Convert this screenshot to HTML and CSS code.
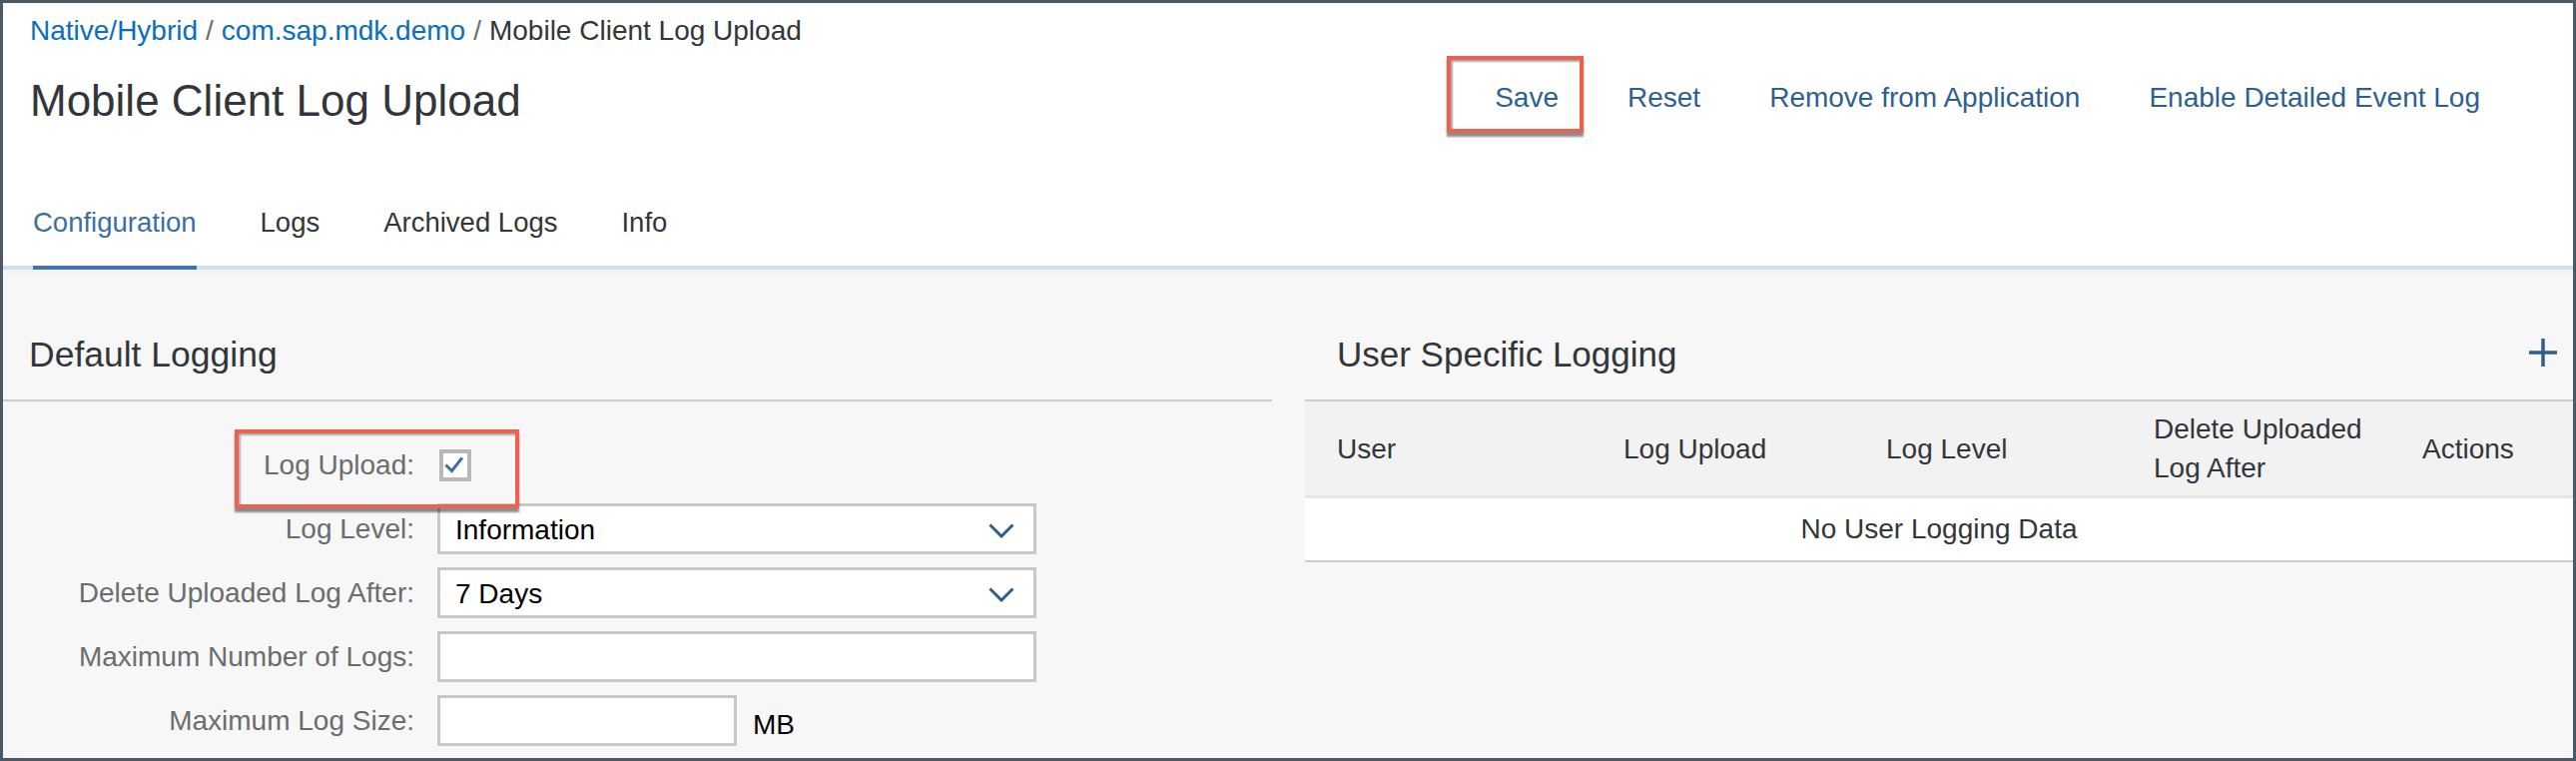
FILE: index.html
```html
<!DOCTYPE html>
<html lang="en">
<head>
<meta charset="utf-8">
<title>Mobile Client Log Upload</title>
<link rel="stylesheet" href="styles.css">
</head>
<body>
<div class="page">
  <header class="obj-header">
    <div class="head-left">
      <nav class="crumbs">
        <a class="crumb-link">Native/Hybrid</a><span class="sep">/</span><a class="crumb-link">com.sap.mdk.demo</a><span class="sep">/</span><span class="crumb-cur">Mobile Client Log Upload</span>
      </nav>
      <h1 class="title">Mobile Client Log Upload</h1>
    </div>
    <div class="actions">
      <button class="act act-marked">Save</button>
      <button class="act">Reset</button>
      <button class="act">Remove from Application</button>
      <button class="act">Enable Detailed Event Log</button>
    </div>
  </header>

  <div class="tabbar">
    <div class="tab tab-active">Configuration</div>
    <div class="tab">Logs</div>
    <div class="tab">Archived Logs</div>
    <div class="tab">Info</div>
  </div>

  <main class="content">
    <section class="panel panel-left">
      <div class="panel-head">
        <h2 class="panel-title">Default Logging</h2>
      </div>
      <div class="form">
        <div class="form-row form-row-marked">
          <label class="form-label">Log Upload:</label>
          <span class="checkbox">
            <svg width="24" height="24" viewBox="0 0 24 24"><path d="M3.5 12.5 L8.5 17.5 L18 5.5" fill="none" stroke="#3a6ea5" stroke-width="3" stroke-linecap="square"/></svg>
          </span>
        </div>
        <div class="form-row">
          <label class="form-label">Log Level:</label>
          <div class="select">
            <span class="select-value">Information</span>
            <svg class="chev" width="26" height="15" viewBox="0 0 26 15"><path d="M1.5 1.5 L13 13 L24.5 1.5" fill="none" stroke="#2f5f8f" stroke-width="3"/></svg>
          </div>
        </div>
        <div class="form-row">
          <label class="form-label">Delete Uploaded Log After:</label>
          <div class="select">
            <span class="select-value">7 Days</span>
            <svg class="chev" width="26" height="15" viewBox="0 0 26 15"><path d="M1.5 1.5 L13 13 L24.5 1.5" fill="none" stroke="#2f5f8f" stroke-width="3"/></svg>
          </div>
        </div>
        <div class="form-row">
          <label class="form-label">Maximum Number of Logs:</label>
          <div class="input input-wide"></div>
        </div>
        <div class="form-row">
          <label class="form-label">Maximum Log Size:</label>
          <div class="input input-short"></div>
          <span class="unit">MB</span>
        </div>
      </div>
    </section>

    <section class="panel panel-right">
      <div class="panel-head panel-head-right">
        <h2 class="panel-title">User Specific Logging</h2>
        <svg class="plus" width="30" height="30" viewBox="0 0 30 30"><path d="M15 1 V29 M1 15 H29" stroke="#2f5f8f" stroke-width="3.5" fill="none"/></svg>
      </div>
      <div class="table">
        <div class="thead">
          <div class="th">User</div>
          <div class="th">Log Upload</div>
          <div class="th">Log Level</div>
          <div class="th">Delete Uploaded<br>Log After</div>
          <div class="th">Actions</div>
        </div>
        <div class="tbody">
          <div class="empty">No User Logging Data</div>
        </div>
      </div>
    </section>
  </main>
</div>
</body>
</html>
```

FILE: styles.css
```css
* { box-sizing: border-box; }

html, body {
  margin: 0;
  padding: 0;
  background: #ffffff;
}

body {
  font-family: "Liberation Sans", Arial, sans-serif;
  font-size: 28px;
  color: #32363a;
}

.page {
  width: 2580px;
  height: 762px;
  border: 3px solid #4b5a66;
  display: flex;
  flex-direction: column;
  overflow: hidden;
}

/* ---------- header ---------- */
.obj-header {
  display: flex;
  justify-content: space-between;
  align-items: flex-start;
  padding: 11px 0 0 27px;
  background: #ffffff;
}

.crumbs {
  font-size: 28px;
  line-height: 34px;
  white-space: nowrap;
}

.crumb-link {
  color: #0a6ebd;
  text-decoration: none;
}

.sep {
  color: #6a6d70;
  padding: 0 8px;
}

.crumb-cur {
  color: #32363a;
}

.title {
  margin: 26.5px 0 0;
  font-size: 44px;
  line-height: 52px;
  font-weight: normal;
  color: #32363a;
  white-space: nowrap;
}

.actions {
  display: flex;
  margin-top: 67px;
  padding-right: 58.5px;
}

.act {
  font-family: inherit;
  font-size: 28px;
  line-height: 34px;
  color: #2f5f8f;
  background: none;
  border: none;
  padding: 0 34.5px;
  margin: 0;
  white-space: nowrap;
}

.act-marked {
  position: relative;
}

.act-marked::after {
  content: "";
  position: absolute;
  left: -14px;
  right: 10px;
  top: -25px;
  bottom: -18px;
  border: 4px solid #eb6350;
  box-shadow: 0 4px 2px rgba(0, 0, 0, 0.45), inset 2px 2px 2px rgba(0, 0, 0, 0.35);
}

/* ---------- tabs ---------- */
.tabbar {
  display: flex;
  gap: 64px;
  padding-left: 30px;
  background: #ffffff;
  box-shadow: inset 0 -4px 0 #d1e0ee;
}

.tab {
  font-size: 27.5px;
  line-height: 34px;
  padding: 79.5px 0 26px;
  border-bottom: 4px solid transparent;
  color: #32363a;
  white-space: nowrap;
}

.tab-active {
  color: #3b6ea5;
  border-bottom-color: #3e75a8;
}

/* ---------- content ---------- */
.content {
  flex: 1;
  display: flex;
  gap: 33px;
  background: #f7f7f7;
  border-top: 4px solid #f1f4f7;
}

.panel-left {
  width: 1271px;
  flex: none;
}

.panel-right {
  flex: 1;
}

.panel-head {
  display: flex;
  align-items: center;
  justify-content: space-between;
  padding: 60px 15px 24px 26px;
  border-bottom: 2px solid #cccccc;
}

.panel-head-right {
  padding-left: 32px;
}

.panel-title {
  margin: 0;
  font-size: 35px;
  line-height: 42px;
  font-weight: normal;
  color: #32363a;
}

.panel-left .panel-title {
  font-size: 35.5px;
}

.plus {
  display: block;
  margin-top: -4px;
}

/* ---------- form ---------- */
.form {
  display: flex;
  flex-direction: column;
  gap: 13px;
  padding-top: 38px;
}

.form-row {
  display: flex;
  align-items: center;
  gap: 23px;
  height: 51px;
}

.form-row-marked {
  position: relative;
}

.form-row-marked::after {
  content: "";
  position: absolute;
  left: 232px;
  width: 277px;
  top: -10px;
  height: 71px;
  border: 4px solid #eb6350;
  box-shadow: 0 4px 2px rgba(0, 0, 0, 0.45), inset 2px 2px 2px rgba(0, 0, 0, 0.3);
}

.form-label {
  width: 412px;
  flex: none;
  text-align: right;
  color: #6a6d70;
  line-height: 34px;
  white-space: nowrap;
}

.checkbox {
  width: 32px;
  height: 32px;
  border: 4px solid #b8b8b8;
  background: #ffffff;
  display: flex;
  align-items: center;
  justify-content: center;
  margin-left: 2px;
}

.checkbox svg {
  display: block;
}

.select,
.input {
  height: 51px;
  background: #ffffff;
  border: 3px solid #c8c8c8;
}

.select {
  width: 600px;
  display: flex;
  align-items: center;
  justify-content: space-between;
  padding: 0 19px 0 15px;
}

.select-value {
  color: #000000;
  line-height: 34px;
  padding-top: 3px;
}

.chev {
  display: block;
  margin-top: 4px;
}

.input-wide {
  width: 600px;
}

.input-short {
  width: 300px;
}

.unit {
  color: #000000;
  margin-left: -7px;
  padding-top: 8px;
}

/* ---------- table ---------- */
.table {
  display: flex;
  flex-direction: column;
}

.thead {
  display: grid;
  grid-template-columns: 287px 263px 268px 269px 1fr;
  align-items: center;
  height: 97px;
  background: #f2f2f2;
  border-bottom: 3px solid #e5e5e5;
}

.th {
  padding-left: 32px;
  line-height: 39px;
  color: #32363a;
}

.tbody {
  background: #ffffff;
  height: 64px;
  border-bottom: 2px solid #cccccc;
  display: flex;
  align-items: center;
  justify-content: center;
}

.empty {
  line-height: 34px;
  color: #32363a;
}
```
